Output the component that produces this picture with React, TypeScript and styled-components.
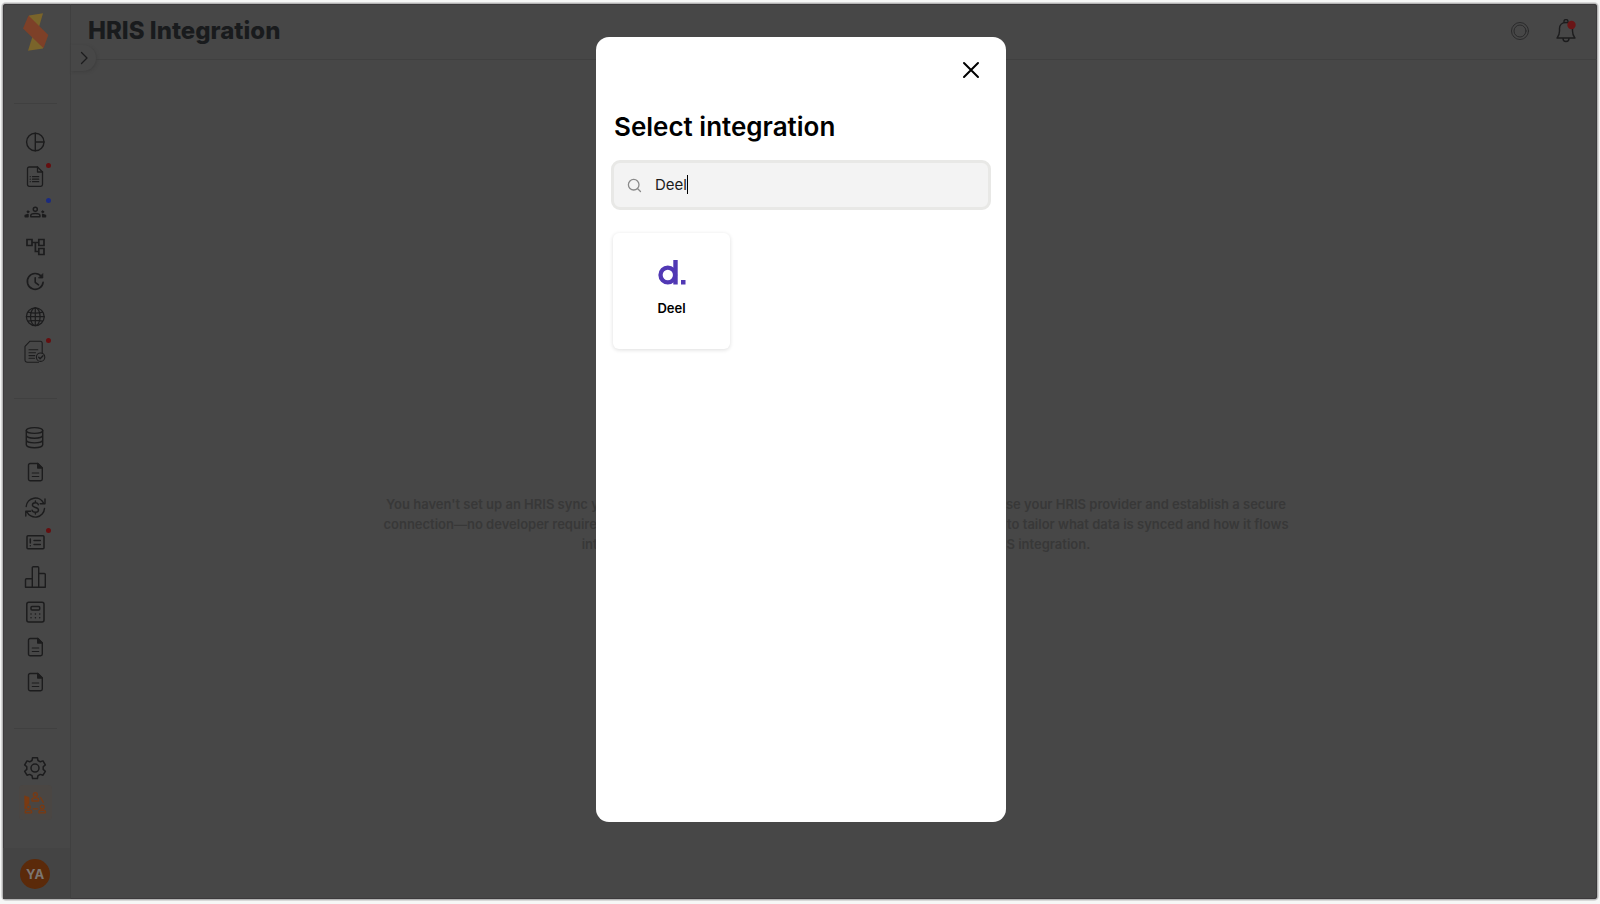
import React, { useState } from "react";
import styled, { createGlobalStyle, css } from "styled-components";

const GlobalStyle = createGlobalStyle`
  *, *::before, *::after { box-sizing: border-box; }
  body {
    margin: 0;
    background: #f6f7f6;
    font-family: Inter, "Liberation Sans", sans-serif;
    color: #000;
  }
  h1, h2, p, ul { margin: 0; padding: 0; }
  ul { list-style: none; }
  button, input { font: inherit; color: inherit; }
  button { border: 0; padding: 0; background: none; cursor: pointer; }
`;

const Page = styled.div`
  min-height: 100vh;
  padding: 4px 3px 6px;
  display: flex;
`;

const Frame = styled.div`
  position: relative;
  flex: 1;
  display: flex;
  background: #474747;
  border-radius: 3px;
  box-shadow: 0 0 0 1px #b4b4b4, 0 0 0 2px #d8d8d8, inset 0 0 0 1px #3c3a3c;
`;

const Sidebar = styled.nav`
  width: 68px;
  flex: none;
  display: flex;
  flex-direction: column;
  padding-right: 2px;
  border-right: 1px solid #404040;
`;

const LogoLink = styled.a`
  display: flex;
  justify-content: center;
  height: 99px;
  padding-top: 8px;
`;

const NavGroup = styled.ul`
  position: relative;
  padding: 22px 0 28px;
  &::before {
    content: "";
    position: absolute;
    top: 0;
    left: 11px;
    right: 11px;
    height: 1px;
    background: #404040;
  }
`;

const NavItem = styled.li`
  display: flex;
  justify-content: center;
  height: 35px;
`;

const NavButton = styled.button<{ $active?: boolean }>`
  position: relative;
  width: 33px;
  height: 35px;
  display: grid;
  place-items: center;
  border-radius: 4px;
  color: #1c1c1d;
  ${(p) =>
    p.$active &&
    css`
      color: #7a3a12;
      background: #4a4643;
    `}
`;

const NavDot = styled.span<{ $color: string }>`
  position: absolute;
  top: 3px;
  left: 27px;
  width: 5px;
  height: 5px;
  border-radius: 50%;
  background: ${(p) => p.$color};
`;

const UserArea = styled.div`
  margin-top: auto;
  margin-right: -2px;
  padding-right: 3px;
  height: 51px;
  display: flex;
  justify-content: center;
  align-items: center;
  background: #444;
`;

const Avatar = styled.button`
  width: 30px;
  height: 30px;
  border-radius: 50%;
  background: #5b2a0a;
  color: #7b7672;
  font-size: 13px;
  font-weight: 700;
`;

const Main = styled.div`
  flex: 1;
  min-width: 0;
  display: flex;
  flex-direction: column;
`;

const Header = styled.header`
  position: relative;
  height: 56px;
  display: flex;
  align-items: center;
  justify-content: space-between;
  padding: 0 19px 1px 17px;
  border-bottom: 1px solid #404040;
`;

const PageTitle = styled.h1`
  font-size: 24px;
  line-height: 32px;
  font-weight: 800;
  color: #191b1d;
  white-space: nowrap;
`;

const ExpandButton = styled.button`
  position: absolute;
  left: 0;
  top: 41px;
  width: 25px;
  height: 26px;
  display: grid;
  place-items: center;
  background: #474747;
  border-radius: 0 13px 13px 0;
  box-shadow: 1px 1px 3px #3f3f3f;
  color: #1c1c1d;
`;

const HeaderActions = styled.div`
  display: flex;
  align-items: center;
  gap: 22px;
`;

const IconButton = styled.button<{ $muted?: boolean }>`
  display: grid;
  place-items: center;
  color: ${(p) => (p.$muted ? "#2a2a2b" : "#1c1c1d")};
`;

const Empty = styled.div`
  flex: 1;
  display: flex;
  justify-content: center;
  align-items: center;
  padding-top: 88px;
  padding-left: 4px;
`;

const EmptyText = styled.p`
  font-size: 13px;
  line-height: 20px;
  font-weight: 600;
  text-align: center;
  color: #383838;
  white-space: nowrap;
`;

const EmptyLine = styled.span`
  display: block;
`;

const Overlay = styled.div`
  position: absolute;
  inset: 0;
  display: flex;
  justify-content: center;
  padding: 33px 0 77px 2px;
`;

const Dialog = styled.section`
  width: 410px;
  max-width: 100%;
  padding: 17px 15px;
  background: #fff;
  border-radius: 13px;
  display: flex;
  flex-direction: column;
`;

const CloseButton = styled.button`
  align-self: flex-end;
  margin-right: 4px;
  width: 32px;
  height: 32px;
  display: grid;
  place-items: center;
`;

const DialogTitle = styled.h2`
  margin-top: 25px;
  padding-left: 3px;
  font-size: 26px;
  line-height: 32px;
  font-weight: 600;
`;

const SearchBox = styled.label`
  position: relative;
  margin-top: 17px;
  height: 50px;
  display: flex;
  align-items: center;
  gap: 13px;
  padding: 0 13px;
  border: 3px solid #e8e8e6;
  border-radius: 9px;
  background: #f3f3f3;
  color: #8a8a8a;
`;

const SearchInput = styled.input`
  flex: 1;
  min-width: 0;
  padding: 0;
  border: 0;
  outline: 0;
  background: none;
  font-size: 15px;
  line-height: 20px;
  color: #1c1c1c;
`;

const Caret = styled.span`
  position: absolute;
  left: 73px;
  top: 12px;
  width: 1px;
  height: 19px;
  background: #000;
`;

const Results = styled.div`
  display: grid;
  grid-template-columns: repeat(3, 117px);
  gap: 12px;
  margin-top: 23px;
  padding-left: 2px;
`;

const ProviderCard = styled.button`
  height: 116px;
  display: flex;
  flex-direction: column;
  align-items: center;
  gap: 14px;
  padding-top: 26px;
  border-radius: 6px;
  background: #fff;
  box-shadow: 0 1px 4px #dedede;
  font-size: 13px;
  line-height: 18px;
  font-weight: 600;
`;

type IconProps = { children: React.ReactNode; size?: number; weight?: number };

const Icon = ({ children, size = 25, weight = 1.4 }: IconProps) => (
  <svg
    width={size}
    height={size}
    viewBox={`0 0 ${size} ${size}`}
    fill="none"
    stroke="currentColor"
    strokeWidth={weight}
    strokeLinecap="round"
    strokeLinejoin="round"
    aria-hidden="true"
  >
    {children}
  </svg>
);

const DocIcon = () => (
  <Icon>
    <path d="M14.7 3.500H7.2A1.7 1.7 0 0 0 5.500 5.200V19.100A1.700 1.700 0 0 0 7.200 20.800H17.600A1.700 1.700 0 0 0 19.300 19.100V8.100Z" />
    <path d="M14.7 3.500V8.100H19.300Z" fill="currentColor" />
    <path d="M9.300 13H15.700M9.300 16.500H15.700" strokeWidth="1.200" />
  </Icon>
);

const PieIcon = () => (
  <Icon>
    <circle cx="12.3" cy="12" r="8.7" />
    <path d="M12.300 3.300V20.700M12.300 12H21" />
  </Icon>
);

const DocListIcon = () => (
  <Icon weight={1.3}>
    <path d="M14.500 2H6.200A1.700 1.700 0 0 0 4.500 3.700V19.600A1.700 1.700 0 0 0 6.200 21.300H17.800A1.700 1.700 0 0 0 19.500 19.600V7Z" />
    <path d="M14.500 2V7H19.500" />
    <path d="M9.500 11.700H15.700M9.500 14.200H15.700M9.500 16.700H15.700M7.200 11.700H7.300M7.200 14.200H7.300M7.200 16.700H7.300" strokeWidth="1.200" />
  </Icon>
);

const PeopleIcon = () => (
  <Icon weight={1.5}>
    <circle cx="12.300" cy="9.300" r="2" />
    <path d="M7.800 16.700V15.600C7.800 14.200 9.500 13.500 12.300 13.500S16.900 14.200 16.900 15.600V16.700Z" />
    <circle cx="5" cy="11.800" r="1" fill="currentColor" strokeWidth=".8" />
    <circle cx="19.700" cy="11.800" r="1" fill="currentColor" strokeWidth=".8" />
    <path d="M2.200 16.700V15.500L5 14.500V16.700ZM22.500 16.700V15.500L19.700 14.500V16.700Z" fill="currentColor" />
  </Icon>
);

const TreeIcon = () => (
  <Icon weight={1.7}>
    <path d="M4 4.500H9V10.500H4ZM15.800 4.500H21V10.500H15.800ZM15.800 13.500H21V19.500H15.800ZM9 7.500H15.800M12.400 7.500V16.500H15.800" strokeLinejoin="miter" />
  </Icon>
);

const ClockIcon = () => (
  <Icon weight={1.6}>
    <path d="M18.300 6.300A7.900 7.900 0 1 0 20.100 12.300" />
    <path d="M19.800 4V8H15.800Z" fill="currentColor" strokeWidth=".8" />
    <path d="M12.200 7.700V12.300L15.500 14.800" />
  </Icon>
);

const GlobeIcon = () => (
  <Icon weight={1.2}>
    <circle cx="12.300" cy="11.700" r="8.900" />
    <ellipse cx="12.300" cy="11.700" rx="4.800" ry="8.900" />
    <path d="M12.300 2.800V20.600M3.400 11.700H21.200M5 7.200Q12.300 9 19.600 7.200M5 16.200Q12.300 14.400 19.600 16.200" />
  </Icon>
);

const DocCheckIcon = () => (
  <Icon weight={1.100}>
    <path d="M19.200 13V3.200A2 2 0 0 0 17.200 1.200H7L2 6.400V20A2.200 2.200 0 0 0 4.200 22.200H15.500" />
    <path d="M6 9.800H14.800M6 12.800H12.500M6 15.600H11.800M6 18.300H11.500" />
    <circle cx="17.600" cy="17.200" r="4.200" />
    <path d="M15.700 17.300L17.100 18.800L20 15.700" strokeWidth="1.300" />
  </Icon>
);

const DatabaseIcon = () => (
  <Icon weight={1.400}>
    <ellipse cx="11.500" cy="5.500" rx="8.200" ry="2.900" />
    <path d="M3.300 5.500V19.800C3.300 21.400 7 22.700 11.500 22.700S19.700 21.400 19.700 19.800V5.500M3.300 10.300C3.300 11.900 7 13.200 11.500 13.200S19.700 11.900 19.700 10.300M3.300 15C3.300 16.600 7 17.900 11.500 17.900S19.700 16.600 19.700 15" />
  </Icon>
);

const DollarIcon = () => (
  <Icon weight={1.400}>
    <path d="M3.200 11.500A9.200 9.200 0 0 1 20.800 8.600M22 4V8.800H17.200M21.500 13.400A9.200 9.200 0 0 1 3.800 16.400M2.800 21V16.300H7.600" />
    <path d="M15.300 9.700C15 8.400 14 7.700 12.400 7.700C10.600 7.700 9.400 8.600 9.400 10C9.400 13.200 15.500 11.700 15.500 15C15.500 16.400 14.200 17.300 12.400 17.300C10.500 17.300 9.400 16.500 9.100 15.100M12.400 6V7.700M12.400 17.300V19" />
  </Icon>
);

const ListCardIcon = () => (
  <Icon weight={1.500}>
    <rect x="4" y="5.800" width="17" height="13" rx="1" />
    <path d="M7.300 9V13M7.300 15.700V15.800M11 10.600H17.300M11 14.500H17.300" />
  </Icon>
);

const ChartIcon = () => (
  <Icon weight={1.400}>
    <path d="M2.500 22.200V14.800A1 1 0 0 1 3.500 13.800H9.300V22.200ZM9.300 22.200V2.700A1 1 0 0 1 10.300 1.700H14.700A1 1 0 0 1 15.700 2.700V22.200ZM15.700 8.500H21.300A1 1 0 0 1 22.300 9.500V22.200H15.700" />
  </Icon>
);

const CalculatorIcon = () => (
  <Icon weight={1.500}>
    <rect x="3.800" y="2.300" width="17.200" height="19.800" rx="2" />
    <rect x="8" y="6.500" width="8.700" height="3.500" rx="1" />
    <path d="M8 14H8.050M12.400 14H12.450M16.700 14H16.750M8 17.700H8.050M12.400 17.700H12.450M16.700 17.700H16.750" />
  </Icon>
);

const GearIcon = () => (
  <Icon weight={1.500}>
    <path d="M9.600 2.700H14.400L15 5.500L17.300 6.800L20 5.900L22.300 9.900L20.200 11.800V14.400L22.300 16.300L20 20.200L17.300 19.400L15 20.700L14.400 23.500H9.600L9 20.700L6.700 19.400L4 20.200L1.700 16.300L3.800 14.400V11.800L1.700 9.900L4 5.900L6.700 6.800L9 5.500Z" />
    <circle cx="12" cy="13.100" r="4" />
  </Icon>
);

const HrisIcon = () => (
  <Icon weight={1.300}>
    <circle cx="12.300" cy="4.600" r="2" />
    <path d="M9 11V9.600C9 8.400 10 7.900 12.300 7.900S15.600 8.400 15.600 9.600V11Z" />
    <circle cx="5.400" cy="17" r="1.900" />
    <path d="M2.200 22.800V21.600C2.200 20.600 3.200 20.200 5.400 20.200S8.600 20.600 8.600 21.600V22.800Z" />
    <circle cx="19.200" cy="17" r="1.900" />
    <path d="M16 22.800V21.600C16 20.600 17 20.200 19.200 20.200S22.400 20.600 22.400 21.600V22.800ZM10 18.800H14.700M17.500 7.500L20.300 12.300" />
    <path d="M2 6L6 7.500V13.500L4 14.500L2 19Z" fill="currentColor" strokeWidth=".8" />
  </Icon>
);

type Item = { label: string; icon: React.ReactNode; dot?: string; active?: boolean };

const RED = "#650f10";
const BLUE = "#1b2b80";

const navGroups: Item[][] = [
  [
    { label: "Dashboard", icon: <PieIcon /> },
    { label: "Requests", icon: <DocListIcon />, dot: RED },
    { label: "People", icon: <PeopleIcon />, dot: BLUE },
    { label: "Org chart", icon: <TreeIcon /> },
    { label: "Time", icon: <ClockIcon /> },
    { label: "Global", icon: <GlobeIcon /> },
    { label: "Approvals", icon: <DocCheckIcon />, dot: RED },
  ],
  [
    { label: "Data", icon: <DatabaseIcon /> },
    { label: "Documents", icon: <DocIcon /> },
    { label: "Payments", icon: <DollarIcon /> },
    { label: "Notices", icon: <ListCardIcon />, dot: RED },
    { label: "Reports", icon: <ChartIcon /> },
    { label: "Calculator", icon: <CalculatorIcon /> },
    { label: "Policies", icon: <DocIcon /> },
    { label: "Templates", icon: <DocIcon /> },
  ],
  [
    { label: "Settings", icon: <GearIcon /> },
    { label: "Integration", icon: <HrisIcon />, active: true },
  ],
];

const emptyLines = [
  "You haven't set up an HRIS sync yet. To get started, use the guided setup button just below to choose your HRIS provider and establish a secure",
  "connection—no developer required. After you are connected, you can use the simple field mapping to tailor what data is synced and how it flows",
  "into your account. Learn more about how to set up and use your HRIS integration.",
];

export default function App() {
  const [query, setQuery] = useState("Deel");
  return (
    <>
      <GlobalStyle />
      <Page>
        <Frame>
          <Sidebar aria-label="Main">
            <LogoLink href="#" aria-label="Home">
              <svg width="27" height="40" viewBox="0 0 27 40" aria-hidden="true">
                <path d="M7 3.500L21 1.300L17 15L7 8Z" fill="#7a642a" />
                <path d="M11 23L6 38.700L21 36.500L22 28Z" fill="#7a642a" />
                <path d="M6.500 3.500L26.300 23L21.500 36.300L1 16.500Z" fill="#7d4028" />
              </svg>
            </LogoLink>
            {navGroups.map((group, i) => (
              <NavGroup key={i}>
                {group.map((item) => (
                  <NavItem key={item.label}>
                    <NavButton aria-label={item.label} $active={item.active}>
                      {item.icon}
                      {item.dot && <NavDot $color={item.dot} />}
                    </NavButton>
                  </NavItem>
                ))}
              </NavGroup>
            ))}
            <UserArea>
              <Avatar>YA</Avatar>
            </UserArea>
          </Sidebar>
          <Main>
            <Header>
              <PageTitle>HRIS Integration</PageTitle>
              <HeaderActions>
                <IconButton aria-label="Status" $muted>
                  <Icon size={24} weight={1}>
                    <circle cx="12" cy="12" r="8.500" />
                    <circle cx="12" cy="12" r="6" />
                  </Icon>
                </IconButton>
                <IconButton aria-label="Notifications">
                  <Icon size={24} weight={1.400}>
                    <path d="M10 3.500V2.500A2 2 0 0 1 14 2.500V3.500M3 19C4.500 17 5.500 16 5.500 12V9.500C5.500 6 8 3.500 12 3.500S18.500 6 18.500 9.500V12C18.500 16 19.500 17 21 19ZM9 19.500A3 3 0 0 0 15 19.500" />
                    <circle cx="17.500" cy="6" r="4.200" fill="#6a1516" stroke="none" />
                  </Icon>
                </IconButton>
              </HeaderActions>
              <ExpandButton aria-label="Expand sidebar">
                <Icon size={14} weight={1.300}>
                  <path d="M4.500 1.500L10 7L4.500 12.500" />
                </Icon>
              </ExpandButton>
            </Header>
            <Empty>
              <EmptyText>
                {emptyLines.map((line) => (
                  <EmptyLine key={line}>{line}</EmptyLine>
                ))}
              </EmptyText>
            </Empty>
          </Main>
          <Overlay>
            <Dialog role="dialog" aria-modal="true" aria-labelledby="dialog-title">
              <CloseButton aria-label="Close">
                <Icon size={18} weight={2}>
                  <path d="M2 2L16 16M16 2L2 16" />
                </Icon>
              </CloseButton>
              <DialogTitle id="dialog-title">Select integration</DialogTitle>
              <SearchBox>
                <Icon size={15} weight={1.300}>
                  <circle cx="6.700" cy="6.700" r="5.300" />
                  <path d="M10.700 10.700L13.500 13.500" />
                </Icon>
                <SearchInput
                  aria-label="Search integrations"
                  value={query}
                  onChange={(e) => setQuery(e.target.value)}
                />
                <Caret />
              </SearchBox>
              <Results>
                <ProviderCard>
                  <svg width="28" height="26" viewBox="0 0 28 26" aria-hidden="true">
                    <circle cx="9.800" cy="16" r="7.300" fill="none" stroke="#5138b4" strokeWidth="4.300" />
                    <path d="M15.300 1H19.700V25.500H15.300ZM23 21H27.500V25.500H23Z" fill="#5138b4" />
                  </svg>
                  Deel
                </ProviderCard>
              </Results>
            </Dialog>
          </Overlay>
        </Frame>
      </Page>
    </>
  );
}
